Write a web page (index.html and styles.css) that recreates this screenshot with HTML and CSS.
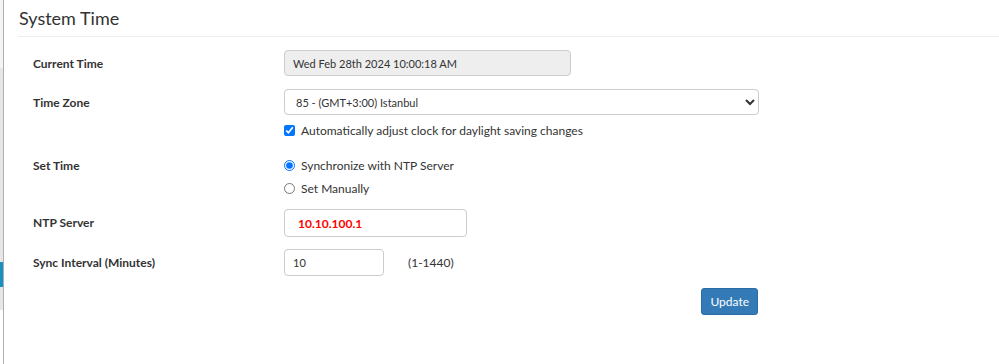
FILE: index.html
```html
<!DOCTYPE html>
<html lang="en">
<head>
  <meta charset="UTF-8">
  <title>System Time</title>
  <link rel="stylesheet" href="styles.css">
</head>
<body>
  <div class="sidebar">
    <div class="side-top"></div>
    <div class="side-grey"></div>
    <div class="side-active"></div>
    <div class="side-grey short"></div>
  </div>
  <div class="main">
    <h2 class="page-title">System Time</h2>
    <form class="settings">
      <div class="row">
        <label class="label">Current Time</label>
        <div class="field">
          <input type="text" class="input input-time" value="Wed Feb 28th 2024 10:00:18 AM" readonly>
        </div>
      </div>
      <div class="row">
        <label class="label">Time Zone</label>
        <div class="field">
          <select class="input input-zone">
            <option>85 - (GMT+3:00) Istanbul</option>
          </select>
          <label class="check"><input type="checkbox" checked> Automatically adjust clock for daylight saving changes</label>
        </div>
      </div>
      <div class="row row-radio">
        <label class="label">Set Time</label>
        <div class="field">
          <label class="check"><input type="radio" name="mode" checked> Synchronize with NTP Server</label>
          <label class="check"><input type="radio" name="mode"> Set Manually</label>
        </div>
      </div>
      <div class="row">
        <label class="label">NTP Server</label>
        <div class="field">
          <input type="text" class="input input-ntp" value="10.10.100.1">
        </div>
      </div>
      <div class="row">
        <label class="label">Sync Interval (Minutes)</label>
        <div class="field inline">
          <input type="text" class="input input-interval" value="10">
          <span class="hint">(1-1440)</span>
        </div>
      </div>
      <div class="actions">
        <button type="button" class="btn">Update</button>
      </div>
    </form>
  </div>
</body>
</html>
```

FILE: styles.css
```css
html, body {
  margin: 0;
  height: 100%;
}
body {
  font-family: 'Lato', 'Liberation Sans', sans-serif;
  font-size: 12px;
  color: #333;
  background: #fff;
  display: flex;
}
.sidebar {
  width: 3px;
  border-right: 1px solid #a7b1b9;
  display: flex;
  flex-direction: column;
}
.side-top    { height: 68px; background: #f4f4f4; }
.side-grey   { height: 194px; background: #e6e6e6; }
.side-active { height: 25px; background: #1c8fc1; }
.side-grey.short { height: 23px; }
.main {
  flex: 1;
  padding: 0 0 0 14px;
}
.page-title {
  margin: 0;
  padding: 7px 0 7px 1px;
  font-size: 18px;
  font-weight: 400;
  line-height: 22px;
  border-bottom: 1px solid #eee;
}
.settings {
  padding: 13px 0 0 15px;
}
.row {
  display: flex;
  margin-bottom: 12px;
}
.label {
  width: 251px;
  font-weight: 700;
  line-height: 27px;
}
.field {
  display: flex;
  flex-direction: column;
  align-items: flex-start;
}
.field.inline {
  flex-direction: row;
  align-items: center;
  gap: 24px;
}
.input {
  font-family: inherit;
  font-size: 11px;
  color: #333;
  height: 26px;
  box-sizing: border-box;
  border: 1px solid #ccc;
  border-radius: 4px;
  background: #fff;
  padding: 0 8px;
  margin: 0;
}
.input-time {
  width: 287px;
  background: #eee;
}
.input-zone {
  width: 475px;
  padding-left: 7px;
}
.input-ntp {
  width: 183px;
  height: 28px;
  padding-left: 13px;
  color: #f00;
  font-size: 12px;
  font-weight: 700;
}
.input-interval {
  width: 100px;
  height: 27px;
}
.check {
  display: flex;
  align-items: center;
  line-height: 23px;
  margin-top: 4px;
}
.check input {
  margin: 0 6px 0 0;
  width: 11px;
  height: 11px;
}
.row-radio { margin-bottom: 9px; }
.row-radio .check { margin-top: 0; }
.row-radio .label { line-height: 23px; }
.hint { font-size: 12px; }
.actions {
  width: 725px;
  margin-top: 2px;
  display: flex;
  justify-content: flex-end;
}
.btn {
  font-family: inherit;
  font-size: 12px;
  color: #fff;
  background: #337ab7;
  border: 1px solid #2e6da4;
  border-radius: 3px;
  padding: 0 8px;
  height: 27px;
}
```
